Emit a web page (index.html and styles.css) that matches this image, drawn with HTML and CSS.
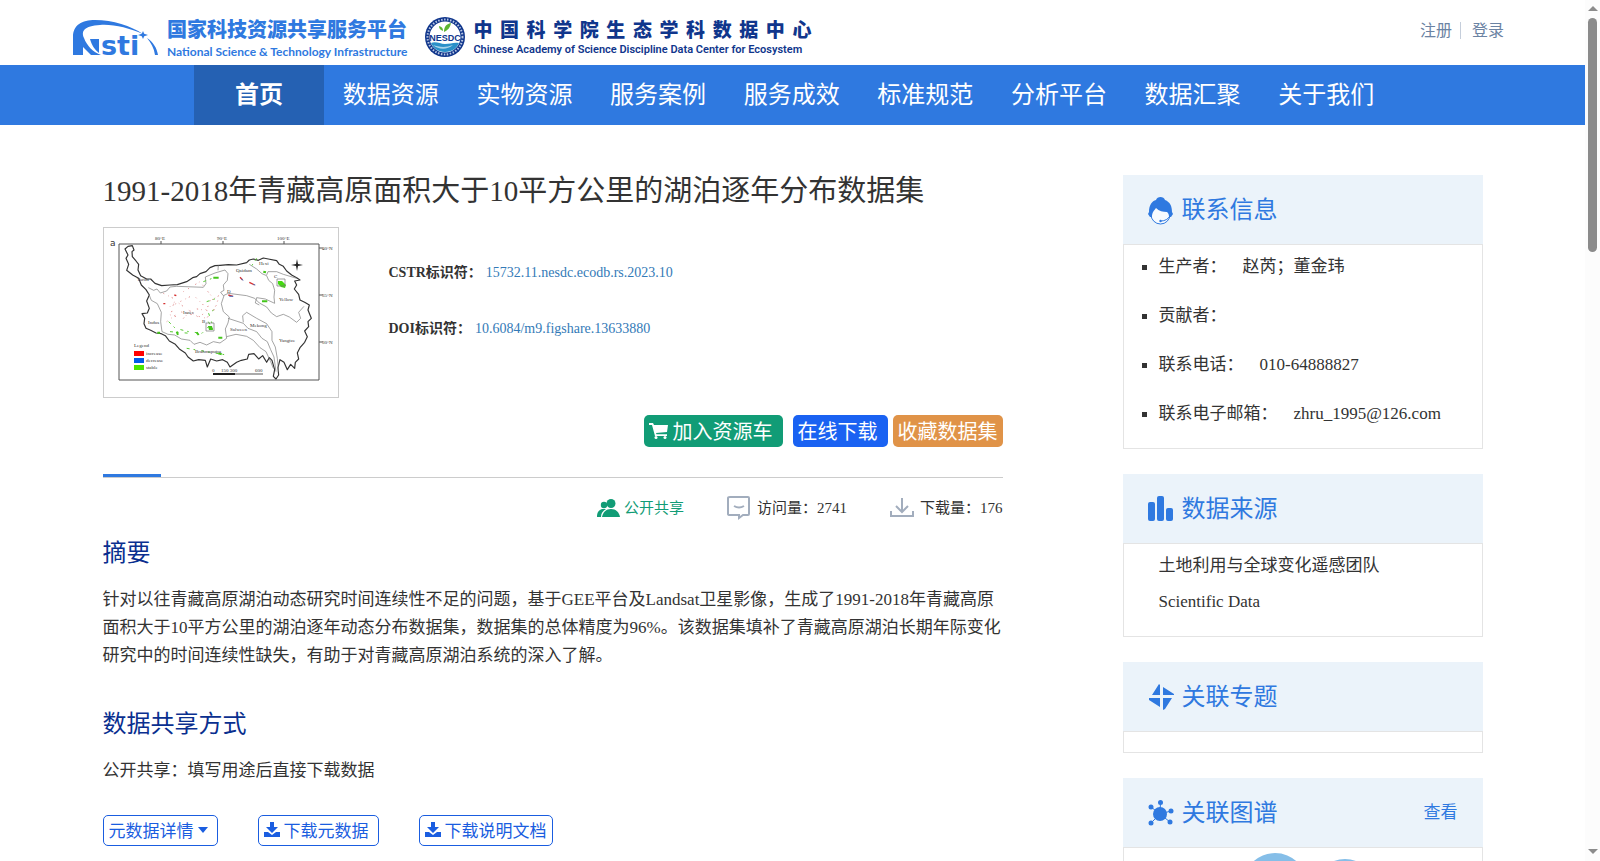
FILE: index.html
```html
<!DOCTYPE html>
<html lang="zh-CN">
<head>
  <meta charset="UTF-8" />
  <meta name="viewport" content="width=device-width, initial-scale=1" />
  <title>1991-2018年青藏高原面积大于10平方公里的湖泊逐年分布数据集</title>
  <link rel="stylesheet" href="styles.css">
</head>
<body>
  <div class="page">
    <header class="top">
      <a class="logo" href="#">
        <svg class="logo-nsti" viewBox="0 0 86 44" width="86" height="44" aria-hidden="true">
          <path d="M0 35V17C0 5 9 0 22 0c18 0 36 6 48 14C56 8 40 4 27 5 11 6 8 11 11 18c3 8 9 14 17 17H18L10 27v8z" fill="#2f79e0"/>
          <path d="M17 19h9v14c-4-3-7-7-9-14z" fill="#2f79e0"/>
          <path d="M70 11l1.200 2.800L75 15l-3.800 1.200L70 19l-1.200-2.800L65 15l3.800-1.200z" fill="#2f79e0"/>
          <path d="M74 18c6 4 10 10 11 17h-3c-1-7-4-12-8-17z" fill="#2f79e0"/>
          <text class="nsti-text" x="28" y="35">sti</text>
        </svg>
        <span class="logo-name">
          <span class="logo-cn">国家科技资源共享服务平台</span>
          <span class="logo-en">National Science &amp; Technology Infrastructure</span>
        </span>
      </a>
      <a class="logo nesdc" href="#">
        <svg class="logo-seal" viewBox="0 0 40 40" width="40" height="40" aria-hidden="true">
          <circle cx="20" cy="20" r="20" fill="#10368c"/>
          <circle cx="20" cy="20" r="17.500" fill="none" stroke="#b9c6e2" stroke-width="2" stroke-dasharray="1.500 1.500"/>
          <circle cx="20" cy="20" r="15.500" fill="#fff"/>
          <path d="M6 26c5-2 9 1 14 1s9-2 14-1c-2 5-7 9-14 9S8 31 6 26z" fill="#2a90c8"/>
          <path d="M8 28c6 2 12 3 20 0-6 5-14 5-20 0z" fill="#fff" opacity=".6"/>
          <path d="M19 15c0-5 2-8 7-9-1 5-3 7-7 9zM18 14c-3-1-4-3-4-5 3 1 4 2 4 5z" fill="#5cb531"/>
          <text class="seal-text" x="20" y="24" text-anchor="middle">NESDC</text>
        </svg>
        <span class="logo-name">
          <span class="logo-cn">中国科学院生态学科数据中心</span>
          <span class="logo-en">Chinese Academy of Science Discipline Data Center for Ecosystem</span>
        </span>
      </a>
      <div class="account">
        <a href="#">注册</a>
        <a href="#">登录</a>
      </div>
    </header>

    <nav class="menu">
      <a class="active" href="#">首页</a>
      <a href="#">数据资源</a>
      <a href="#">实物资源</a>
      <a href="#">服务案例</a>
      <a href="#">服务成效</a>
      <a href="#">标准规范</a>
      <a href="#">分析平台</a>
      <a href="#">数据汇聚</a>
      <a href="#">关于我们</a>
    </nav>

    <div class="content">
      <main>
        <h1>1991-2018年青藏高原面积大于10平方公里的湖泊逐年分布数据集</h1>

        <div class="intro">
          <!-- dataset thumbnail: lake distribution map -->
          <svg class="thumb" viewBox="0 0 234 169" width="234" height="169" role="img" aria-label="青藏高原湖泊分布图">
            <path d="M15 16h200v136H15zM57 13v3M119 13v3M180 13v3M215 20h4M215 67h4M215 114h4" fill="none" stroke="#555"/>
            <g transform="translate(-4 -3) scale(.3333)" fill="none" stroke-linejoin="round">
              <path d="M75 72L84 64 97 62 102 75 96 80 97 95 108 108 116 118 114 135 122 152 140 162 152 162 165 175 185 182 210 180 232 179 260 170 278 158 290 155 300 146 318 140 330 128 345 122 360 121 385 119 410 120 440 113 448 105 460 102 475 106 490 99 505 102 530 107 538 118 550 124 560 138 575 150 590 158 600 165 584 168 590 180 583 192 596 208 600 225 614 232 628 240 624 255 634 280 624 290 626 305 614 318 622 335 614 352 600 368 592 384 596 402 586 412 584 430 572 418 562 434 552 412 540 404 534 428 536 450 528 462 520 454 524 434 516 406 508 398 500 412 488 392 476 402 462 386 446 388 442 402 424 406 410 412 390 426 382 412 368 404 350 408 332 402 322 426 316 406 296 404 280 408 264 396 256 384 238 372 226 358 208 348 196 332 184 326 168 324 152 316 138 310 132 296 134 280 126 266 142 264 148 250 140 228 148 210 138 194 124 180 116 160 98 150 80 136 86 118 78 100 84 90z" stroke="#333" stroke-width="3.500"/>
              <path d="M145 188L161 196 171 192 181 204 200 198 210 186 230 184 310 187 318 176 316 156 345 144 375 135 384 146 382 166 370 180 372 196 362 202 370 212 385 205 440 212 464 220 478 234 500 246 514 264 530 275 550 268 568 276 590 292 602 280 596 262 612 244M355 121L354 136M448 118L470 132 486 146 500 152 506 166 518 176 524 196 522 216 524 235 496 222 470 218 466 234 478 240M500 150L504 140 530 140 550 148 590 160M372 212L364 236 370 260 388 276 384 294 376 312 380 340 360 354 340 350 320 360 300 352 282 358 270 346 244 342 224 330 204 328 186 320 182 290 184 262 172 236 154 226 146 206M384 280L430 295 444 310 470 320 486 340 502 350 512 374 522 396 528 440M430 292L428 272 440 262 470 280 500 296 516 320 516 346 526 366 532 400 536 440M380 335L408 328 440 334 460 346 480 368 498 380 512 410 520 430" stroke="#777" stroke-width="2"/>
              <g stroke-width="3">
                <path d="M190 205l40 20-20 20 70-35 30 30 50-30-20 50-60-10-30 30-40-10 20-40 70 50 40-60-40-50-50 30M200 290l40-30 80 20 30-40" stroke="#e08b8b" stroke-dasharray="3 14 2 9 4 22"/>
                <path d="M206 290l20 20 40 10 40 5 30-30-10-30 30-20M310 170l40-15M320 230l30-10M210 320l60 5M260 370l60 10 60 10M470 100l-20 30M325 290l14 24" stroke="#57c932" stroke-dasharray="9 12 5 18"/>
                <path d="M420 157l8 8M448 172l16 8M385 210l14 4M190 236h6M223 210l6 2" stroke="#d53030" stroke-width="4"/>
                <path d="M424 162l6 4M460 178l6 2M388 214l12 0" stroke="#4a78c8"/>
                <path d="M340 158h16M490 140l8 2M486 229h16M355 338h12M230 320l4 10M290 322l6 8M172 323h8M355 385l10 3" stroke="#44c51b" stroke-width="6"/>
              </g>
            </g>
            <path d="M174 53l4 0 4 4-1 3-4-1-3-3z" fill="#44d911"/>
            <path d="M104 98l4 0 1 4-4 0z" fill="#44c51b"/>
            <path d="M173 51h8v7h-8zM102 95h8v8h-8z" fill="none" stroke="#777" stroke-width=".7"/>
            <path d="M193 31l1 5 5 1-5 1-1 5-1-5-5-1 5-1z" fill="#222"/>
            <path d="M30 123h10v5H30z" fill="#f00"/>
            <path d="M30 130h10v5H30z" fill="#005be8"/>
            <path d="M30 137h10v5H30z" fill="#4ae500"/>
            <path d="M109 145h22v2h-22z" fill="#222"/>
            <path d="M131 145h28v2h-28z" fill="#aaa"/>
            <g class="map-text">
              <text class="map-mark" x="6" y="18">a</text>
              <text x="51" y="12">80°E</text><text x="113" y="12">90°E</text><text x="173" y="12">100°E</text>
              <text x="218" y="22">40°N</text><text x="218" y="69">35°N</text><text x="218" y="116">30°N</text>
              <text x="33" y="53">Tarim</text><text x="132" y="44">Qaidam</text><text x="155" y="37">Hexi</text>
              <text x="175" y="73">Yellow</text><text x="79" y="86">Inner</text><text x="44" y="96">Indus</text>
              <text x="126" y="103">Salween</text><text x="146" y="99">Mekong</text><text x="175" y="114">Yangtze</text>
              <text x="91" y="125">Brahmaputra</text><text x="98" y="95">B</text><text x="170" y="50">C</text><text x="123" y="65">D</text>
              <text x="30" y="119">Legend</text><text x="42" y="127">increase</text><text x="42" y="134">decrease</text><text x="42" y="141">stable</text>
              <text x="108" y="144">0</text><text x="117" y="144">150 300</text><text x="151" y="144">600</text>
            </g>
          </svg>
          <dl class="ids">
            <div><dt>CSTR标识符：</dt><dd><a href="#">15732.11.nesdc.ecodb.rs.2023.10</a></dd></div>
            <div><dt>DOI标识符：</dt><dd><a href="#">10.6084/m9.figshare.13633880</a></dd></div>
          </dl>
        </div>

        <div class="actions">
          <button class="btn cart" type="button">
            <svg viewBox="0 0 19 17" width="19" height="17" aria-hidden="true"><path d="M0 1h4l1 2h14l-1 7-11 1 .5 1.200H18V14H6L3 3H0z" fill="#fff"/><circle cx="7" cy="15.500" r="1.500" fill="#fff"/><circle cx="16" cy="15.500" r="1.500" fill="#fff"/></svg>
            加入资源车
          </button>
          <button class="btn online" type="button">在线下载</button>
          <button class="btn favorite" type="button">收藏数据集</button>
        </div>

        <div class="stats">
          <span class="open">
            <svg viewBox="0 0 23 19" width="23" height="19" aria-hidden="true"><circle cx="7" cy="6" r="3.200" fill="#119c76"/><path d="M0 18c0-5 2-7 5-8h4c-3 2-5 4-5 8z" fill="#119c76"/><circle cx="14" cy="4.500" r="4.500" fill="#119c76"/><path d="M5 18c1-5 4-8 9-8s8 3 9 8z" fill="#119c76"/></svg>
            公开共享
          </span>
          <span>
            <svg viewBox="0 0 24 24" width="24" height="24" aria-hidden="true"><path d="M3 1h18q1 0 1 1v16q0 1-1 1h-5l-4 3v-3H3q-2 0-2-1V2q0-1 2-1zM7 10q5 3 10 0" fill="none" stroke="#a2adbd" stroke-width="2"/></svg>
            访问量：2741
          </span>
          <span>
            <svg viewBox="0 0 24 20" width="24" height="20" aria-hidden="true"><path d="M12 0v14M6 8l6 6 6-6M1 13v5h22v-5" fill="none" stroke="#a2adbd" stroke-width="2"/></svg>
            下载量：176
          </span>
        </div>

        <section>
          <h2>摘要</h2>
          <p>针对以往青藏高原湖泊动态研究时间连续性不足的问题，基于GEE平台及Landsat卫星影像，生成了1991-2018年青藏高原面积大于10平方公里的湖泊逐年动态分布数据集，数据集的总体精度为96%。该数据集填补了青藏高原湖泊长期年际变化研究中的时间连续性缺失，有助于对青藏高原湖泊系统的深入了解。</p>
        </section>

        <section>
          <h2>数据共享方式</h2>
          <p>公开共享：填写用途后直接下载数据</p>
        </section>

        <div class="downloads">
          <button type="button">元数据详情
            <svg viewBox="0 0 10 6" width="10" height="6" aria-hidden="true"><path d="M0 0h10L5 6z" fill="#1a5de0"/></svg>
          </button>
          <button class="meta-file" type="button">
            <svg viewBox="0 0 16 16" width="16" height="16" aria-hidden="true"><path d="M6 0h4v5h4l-6 6-6-6h4zM0 10h4l4 3 4-3h4v5H0z" fill="#1a5de0"/></svg>
            下载元数据
          </button>
          <button type="button">
            <svg viewBox="0 0 16 16" width="16" height="16" aria-hidden="true"><path d="M6 0h4v5h4l-6 6-6-6h4zM0 10h4l4 3 4-3h4v5H0z" fill="#1a5de0"/></svg>
            下载说明文档
          </button>
        </div>
      </main>

      <aside>
        <section class="panel">
          <h3>
            <svg viewBox="0 0 26 30" width="26" height="30" aria-hidden="true"><circle cx="12.500" cy="19.500" r="9.500" fill="#f8fbfe" stroke="#2f79e0"/><path d="M1 17C1 10 4 6 8 5c1-4 8-4 9 0 5 2 7 6 7 12l1 2-2 3h-2c0-3-1-4-2-5-4 0-8-1-11-4-2 3-4 4-4 9H2l-2-3z" fill="#2f79e0"/><path d="M22 21c-2 3-5 5-9 5" fill="none" stroke="#2f79e0"/><circle cx="12.500" cy="26" r="1.200" fill="#2f79e0"/></svg>
            联系信息
          </h3>
          <ul class="contact">
            <li>生产者：<span>赵芮；董金玮</span></li>
            <li>贡献者：</li>
            <li>联系电话：<span>010-64888827</span></li>
            <li>联系电子邮箱：<span>zhru_1995@126.com</span></li>
          </ul>
        </section>

        <section class="panel">
          <h3>
            <svg viewBox="0 0 26 26" width="26" height="26" aria-hidden="true"><g fill="#2f79e0"><rect x="0" y="6" width="7" height="19" rx="2"/><rect x="9" y="0" width="7" height="25" rx="2"/><rect x="18" y="12" width="7" height="13" rx="2"/></g></svg>
            数据来源
          </h3>
          <div class="source">
            <p>土地利用与全球变化遥感团队</p>
            <p>Scientific Data</p>
          </div>
        </section>

        <section class="panel">
          <h3>
            <svg viewBox="0 0 26 26" width="26" height="26" aria-hidden="true"><path d="M4 11L11 0l1 1v10zM15 3l11 7v1H15zM1 14h11v9L1 16zM15 14h9l-7 11-2 1z" fill="#2f79e0"/></svg>
            关联专题
          </h3>
          <div class="topics"></div>
        </section>

        <section class="panel">
          <h3>
            <svg viewBox="0 0 26 26" width="26" height="26" aria-hidden="true"><g fill="#2f79e0"><circle cx="12" cy="14" r="7"/><circle cx="12.500" cy="2.500" r="2.500"/><circle cx="3" cy="7" r="2.500"/><circle cx="23" cy="11" r="2.500"/><circle cx="3" cy="23" r="2.500"/><circle cx="22" cy="22" r="2.500"/></g><path d="M12 14l.5-12M12 14L3 7M12 14l11-3M12 14l-9 9M12 14l10 8" stroke="#2f79e0"/></svg>
            关联图谱
            <a href="#">查看</a>
          </h3>
          <div class="graph">
            <svg viewBox="0 0 358 240" aria-hidden="true"><g fill="#85bee8"><circle cx="151" cy="37" r="32"/><circle cx="221" cy="42" r="31"/></g></svg>
          </div>
        </section>
      </aside>
    </div>
  </div>

  <div class="scrollbar" aria-hidden="true"><i></i></div>
</body>
</html>
```

FILE: styles.css
```css
* {
  box-sizing: border-box;
}

body {
  margin: 0;
  background: #fff;
  color: #333;
  font: 17px/28px "Liberation Serif", "Noto Sans CJK SC", serif;
}

h1, h2, h3, p, ul, dl, dd {
  margin: 0;
  padding: 0;
  font-weight: normal;
}

a {
  color: #337ab7;
  text-decoration: none;
}

button {
  font-family: inherit;
  cursor: pointer;
}

.page {
  height: 100vh;
  padding-right: 15px;
  overflow: hidden;
}

/* header */
.top {
  display: flex;
  align-items: flex-start;
  height: 65px;
  padding: 17px 81px 0 73px;
}

.logo {
  display: flex;
  gap: 8px;
  color: #2f79e0;
}

.logo-nsti {
  margin-top: 3px;
}

.nsti-text {
  font: bold 27px "DejaVu Sans", sans-serif;
  fill: #2f79e0;
}

.logo-name {
  display: flex;
  flex-direction: column;
  white-space: nowrap;
}

.logo-cn {
  font: 900 20px/24px "Noto Sans CJK SC", sans-serif;
}

.logo-en {
  font: bold 12px/22px Lato, sans-serif;
}

.nesdc {
  margin-left: 18px;
  color: #10368c;
}

.nesdc .logo-name {
  width: 338px;
}

.nesdc .logo-cn {
  font-size: 19px;
  text-align-last: justify;
}

.nesdc .logo-en {
  font: 600 11px/18px Roboto, sans-serif;
}

.seal-text {
  font: bold 9px "Liberation Sans", sans-serif;
  fill: #10368c;
}

.account {
  display: flex;
  margin-left: auto;
  line-height: 17px;
  padding-top: 5px;
  font-size: 16px;
}

.account a {
  color: #6b83a3;
}

.account a + a {
  margin-left: 8px;
  padding-left: 11px;
  border-left: 1px solid #c5cedb;
}

.menu {
  display: flex;
  padding: 0 192px 0 194px;
  background: #2f79e0;
}

.menu a {
  flex: 1;
  color: #fff;
  font-size: 24px;
  line-height: 60px;
  text-align: center;
  white-space: nowrap;
}

.menu .active {
  flex: none;
  width: 130px;
  background: #2561b3;
  font-weight: bold;
}

/* main column */
.content {
  display: flex;
  justify-content: space-between;
  max-width: 1380px;
  margin: 50px auto 0;
}

main {
  width: 900px;
}

h1 {
  font-size: 29px;
  line-height: 32px;
}

.intro {
  display: flex;
  margin-top: 20px;
}

.thumb {
  box-sizing: content-box;
  border: 1px solid #ccc;
}

.map-text {
  font-size: 5px;
  fill: #333;
}

.map-mark {
  font: 9px "DejaVu Sans", sans-serif;
}

.ids {
  margin: 32px 0 0 50px;
  font-size: 14px;
}

.ids div {
  display: flex;
  gap: 4px;
  margin-bottom: 28px;
}

.ids dt {
  font-weight: bold;
}

.actions {
  display: flex;
  justify-content: flex-end;
  margin-top: 17px;
  padding-bottom: 30px;
  border-bottom: 1px solid #ccc;
  position: relative;
}

.actions::after {
  content: "";
  position: absolute;
  left: 0;
  bottom: 0;
  width: 58px;
  height: 3px;
  background: #2f79e0;
}

.btn {
  display: flex;
  align-items: center;
  gap: 5px;
  height: 32px;
  padding: 0 5px 2px;
  border: 0;
  border-radius: 5px;
  color: #fff;
  font-size: 20px;
}

.cart {
  margin-right: 10px;
  padding-right: 10px;
  background: #119c76;
}

.online {
  margin-right: 5px;
  padding-right: 10px;
  background: #1a62f2;
}

.favorite {
  background: #e09348;
}

.stats {
  display: flex;
  justify-content: flex-end;
  gap: 43px;
  margin-top: 16px;
  font-size: 15px;
}

.stats span {
  display: flex;
  align-items: center;
  gap: 6px;
}

.stats .open {
  gap: 4px;
  color: #119c76;
}

h2 {
  margin: 16px 0 18px;
  color: #0a2f8f;
  font-size: 24px;
  line-height: 30px;
}

section + section h2 {
  margin-top: 39px;
}

.downloads {
  display: flex;
  gap: 40px;
  margin-top: 30px;
}

.downloads button {
  display: flex;
  align-items: center;
  gap: 4px;
  height: 31px;
  padding: 0 5px 2px;
  border: 1px solid #1a5de0;
  border-radius: 5px;
  background: #fff;
  color: #1a5de0;
  font-size: 17px;
}

.downloads button:first-child,
.downloads .meta-file {
  padding-right: 9px;
}

/* side column */
aside {
  width: 360px;
}

.panel {
  margin-bottom: 25px;
}

.panel h3 {
  display: flex;
  align-items: center;
  gap: 8px;
  height: 69px;
  padding: 0 25px;
  background: #ebf3fa;
  color: #2f79e0;
  font-size: 24px;
}

.panel h3 a {
  margin-left: auto;
  color: #2f79e0;
  font-size: 17px;
}

.panel > :last-child {
  border: 1px solid #e4e4e4;
}

.contact {
  padding: 8px 18px 20px;
  list-style: none;
}

.contact li {
  display: flex;
  align-items: center;
  margin-bottom: 21px;
}

.contact li:last-child {
  margin-bottom: 0;
}

.contact li::before {
  content: "";
  width: 5px;
  height: 5px;
  margin-right: 12px;
  background: #333;
}

.contact span {
  margin-left: 16px;
}

.source {
  padding: 8px 35px 20px;
}

.source p + p {
  margin-top: 8px;
}

.topics {
  height: 22px;
}

/* scrollbar */
.scrollbar {
  position: fixed;
  top: 0;
  right: 0;
  bottom: 0;
  width: 15px;
  background: #fcfcfc;
}

.scrollbar i {
  position: absolute;
  top: 18px;
  left: 3px;
  width: 9px;
  height: 234px;
  border-radius: 5px;
  background: #8b8b8b;
}

.scrollbar::before,
.scrollbar::after {
  content: "";
  position: absolute;
  left: 3px;
  border: 5px solid transparent;
}

.scrollbar::before {
  top: 1px;
  border-bottom-color: #8b8b8b;
}

.scrollbar::after {
  bottom: 2px;
  border-top-color: #8b8b8b;
}
```
